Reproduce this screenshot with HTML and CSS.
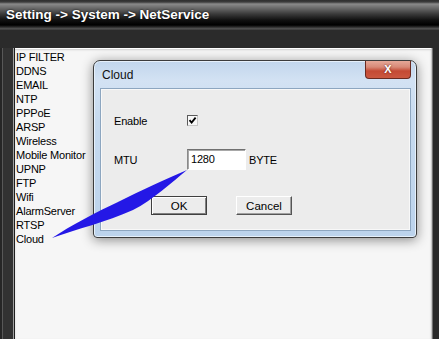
FILE: index.html
```html
<!DOCTYPE html>
<html lang="en">
<head>
  <meta charset="UTF-8" />
  <title>NetService</title>
  <link rel="stylesheet" href="styles.css">
</head>
<body>
  <div class="header">Setting -&gt; System -&gt; NetService</div>
  <div class="main">
    <div class="side-left"></div>
    <div class="panel">
      <ul class="service-list">
        <li>IP FILTER</li>
        <li>DDNS</li>
        <li>EMAIL</li>
        <li>NTP</li>
        <li>PPPoE</li>
        <li>ARSP</li>
        <li>Wireless</li>
        <li>Mobile Monitor</li>
        <li>UPNP</li>
        <li>FTP</li>
        <li>Wifi</li>
        <li>AlarmServer</li>
        <li>RTSP</li>
        <li>Cloud</li>
      </ul>
    </div>
    <div class="side-right"></div>
  </div>

  <div class="dialog">
    <div class="dialog-title">
      <span>Cloud</span>
      <div class="close-btn">X</div>
    </div>
    <div class="dialog-body">
      <div class="field field-enable">
        <span class="field-label">Enable</span>
        <span class="checkbox">
          <svg width="9" height="9" viewBox="0 0 9 9">
            <path d="M1.5 4.2 L3.6 6.6 L7.6 1.6" fill="none" stroke="#000" stroke-width="1.8"/>
          </svg>
        </span>
      </div>
      <div class="field field-mtu">
        <span class="field-label">MTU</span>
        <span class="text-box">1280</span>
        <span class="unit">BYTE</span>
      </div>
      <div class="buttons">
        <button class="btn btn-default">OK</button>
        <button class="btn">Cancel</button>
      </div>
    </div>
  </div>

  <!-- blue pointer drawn over the screen -->
  <svg class="pointer" width="439" height="339" viewBox="0 0 439 339">
    <path d="M52,238 C70,226 98,211 118,202 C142,190 168,178 187,170 C172,182 153,200 133,210 C106,222 77,229 52,238 Z" fill="#2418e6"/>
  </svg>
</body>
</html>
```

FILE: styles.css
```css
body {
  margin: 0;
  width: 439px;
  height: 339px;
  overflow: hidden;
  background: #2b2b2b;
  font-family: 'Liberation Sans', Arial, sans-serif;
  position: relative;
}
.header {
  height: 30px;
  box-sizing: border-box;
  padding: 7px 0 0 6px;
  color: #fff;
  font-weight: bold;
  font-size: 13.5px;
  text-shadow: 0 0 2px #000;
  background: linear-gradient(to bottom, #2e2e2e 0, #3c3c3c 2px, #8a8a8a 4px, #6a6a6a 8px, #3a3a3a 14px, #111 20px, #000 25px, #2a2a2a 27px, #5a5a5a 29px, #2b2b2b 30px);
}
.main {
  display: flex;
  margin-top: 18px;
  height: 291px;
}
.side-left {
  width: 15px;
  background: linear-gradient(to right, #262626 0, #262626 2px, #585858 2px, #585858 3px, #323232 3px, #323232 13px, #a0a0a0 13px, #a0a0a0 14px, #1e1e1e 14px);
}
.side-right {
  width: 8px;
  background: linear-gradient(to right, #c8c8c8 0, #c8c8c8 1px, #707070 1px, #707070 2px, #2a2a2a 2px);
}
.panel {
  flex: 1;
  background: #f6f6f6;
  border-top: 1px solid #fff;
  box-shadow: inset 0 1px 2px #d0d0d0;
}
.service-list {
  list-style: none;
  margin: 0;
  padding: 1px 0 0 1px;
}
.service-list li {
  height: 14px;
  line-height: 14px;
  font-size: 11px;
  letter-spacing: -0.2px;
  color: #000;
}

/* dialog window */
.dialog {
  position: absolute;
  left: 93px;
  top: 60px;
  width: 324px;
  height: 178px;
  box-sizing: border-box;
  border: 1px solid #3c3c3c;
  border-radius: 7px 7px 4px 4px;
  padding: 0 5px 6px 6px;
  display: flex;
  flex-direction: column;
  background: linear-gradient(to bottom, #c2d6ec 0, #d3e2f3 20px, #c6daef 60px, #bcd3ec 100%);
  box-shadow: 0 2px 12px rgba(0,0,0,0.45), inset 0 0 0 1px #e6f0fa;
}
.dialog-title {
  height: 27px;
  display: flex;
  align-items: center;
  justify-content: space-between;
  padding-left: 2px;
  font-size: 12px;
  color: #111;
  position: relative;
}
.close-btn {
  position: absolute;
  top: 0;
  right: 0;
  width: 46px;
  height: 18px;
  box-sizing: border-box;
  border: 1px solid #6a2a20;
  border-top: none;
  border-radius: 0 0 4px 4px;
  background: linear-gradient(to bottom, #e6a898 0, #d88a78 6px, #c44a34 10px, #cc5a42 18px);
  color: #fff;
  font-weight: bold;
  font-size: 11px;
  text-align: center;
  line-height: 16px;
  text-shadow: 0 0 2px #5a1a10;
}
.dialog-body {
  flex: 1;
  background: #ececec;
  border: 1px solid #8da6c0;
  box-shadow: inset 0 0 0 1px #f8f8f8;
  font-size: 11px;
  letter-spacing: -0.2px;
  color: #000;
}
.field {
  display: flex;
  align-items: center;
  padding-left: 13px;
}
.field-label {
  width: 73px;
}
.field-enable {
  margin-top: 26px;
  height: 11px;
}
.field-mtu {
  margin-top: 23px;
}
.checkbox {
  width: 11px;
  height: 11px;
  box-sizing: border-box;
  border: 1px solid #5a5a5a;
  border-right-color: #c8c8c8;
  border-bottom-color: #c8c8c8;
  background: #f8f8f8;
  display: flex;
  align-items: center;
  justify-content: center;
}
.text-box {
  width: 59px;
  height: 21px;
  box-sizing: border-box;
  padding: 1px 0 0 3px;
  background: #fff;
  border: 1px solid #fff;
  border-top-color: #707070;
  border-left-color: #8a8a8a;
  box-shadow: inset 1px 1px 0 #a8a8a8;
  line-height: 16px;
}
.unit {
  margin-left: 3px;
}
.buttons {
  display: flex;
  gap: 29px;
  margin-top: 26px;
  padding-left: 50px;
}
.btn {
  width: 56px;
  height: 19px;
  box-sizing: border-box;
  padding: 0;
  font-family: 'Liberation Sans', Arial, sans-serif;
  font-size: 11.5px;
  color: #000;
  background: #ececec;
  border: 1px solid #fff;
  border-right-color: #555;
  border-bottom-color: #555;
  box-shadow: inset -1px -1px 0 #a0a0a0;
}
.btn-default {
  border: 1px solid #404040;
  box-shadow: inset 1px 1px 0 #fff, inset -1px -1px 0 #808080;
}
.pointer {
  position: absolute;
  left: 0;
  top: 0;
  pointer-events: none;
}
```
